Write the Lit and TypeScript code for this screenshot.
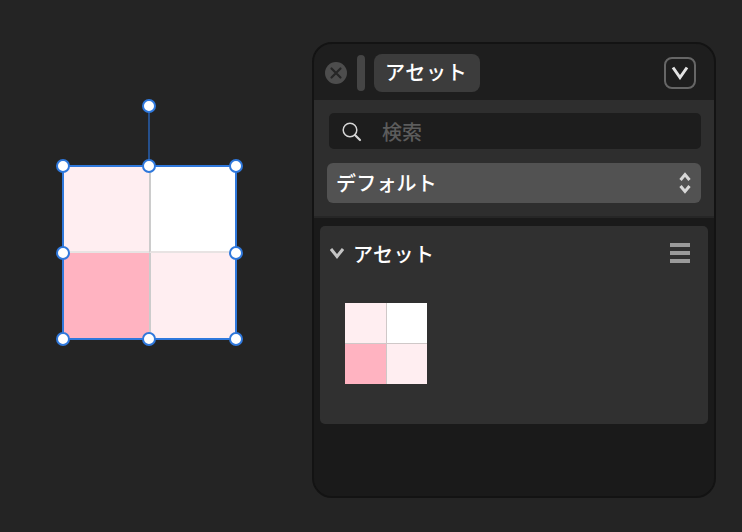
import { LitElement, html, css } from "lit";
import { customElement } from "lit/decorators.js";

const handles: [number, number][] = [
  [149, 106], [63, 166], [149, 166], [236, 166], [63, 253], [236, 253], [63, 339], [149, 339], [236, 339],
];

@customElement("app-root")
export class AppRoot extends LitElement {
  static styles = css`
    :host { display: block; width: 742px; height: 532px; background: #242424; overflow: hidden;
      font-family: "Inter", "Noto Sans CJK JP", sans-serif; }
    .page { display: flex; height: 532px; box-sizing: border-box; padding: 0 26px 0 0; }
    .canvas { position: relative; width: 312px; flex: none; }
    .shape { position: absolute; left: 62px; top: 165px; width: 175px; height: 175px; box-sizing: border-box;
      border: 2px solid #2f78dc; }
    .shape .tile { grid-template-columns: 85px 1fr; }
    .stem { position: absolute; left: 148px; top: 106px; width: 2px; height: 60px; background: #26508c; }
    .handle { position: absolute; width: 14px; height: 14px; box-sizing: border-box; border-radius: 50%;
      background: #fff; border: 2px solid #2f78dc; margin: -7px 0 0 -7px; }
    .tile { display: grid; width: 100%; height: 100%; grid-template: 1fr 1fr / 1fr 1fr; }
    .tile div { box-sizing: border-box; }
    .c1 { background: #ffeef1; }
    .c2 { background: #fff; }
    .c3 { background: #ffb3c1; }
    .c4 { background: #ffeef1; }
    .c2, .c4 { border-left: 2px solid #ccc; }
    .c1, .c2 { border-bottom: 2px solid #e8e3e3; }
    .panel { flex: 1; margin: 42px 0 34px; display: flex; flex-direction: column; box-sizing: border-box; border: 2px solid #131313;
      border-radius: 20px; background: #1a1a1a; overflow: hidden; }
    .head { height: 56px; flex: none; display: flex; align-items: center; padding: 2px 18px 0 11px; background: #1e1e1e; box-sizing: border-box; }
    .close { width: 22px; height: 22px; flex: none; display: block; }
    .sep { width: 8px; height: 36px; border-radius: 4px; background: #454545; margin: 0 9px 0 10px; }
    .tab { width: 106px; height: 38px; border-radius: 8px; background: #3c3c3c; color: #fff; font-size: 20px; font-weight: 500;
      display: flex; align-items: center; padding: 0 0 3px 11px; box-sizing: border-box; letter-spacing: 0.7px; }
    .collapse { margin-left: auto; margin-top: -1px; width: 32px; height: 32px; box-sizing: border-box; border: 2px solid #666; border-radius: 8px;
      display: flex; align-items: center; justify-content: center; }
    .filters { height: 118px; flex: none; background: #2e2e2e; box-sizing: border-box; padding: 13px 13px 0 13px; border-bottom: 2px solid #262626; }
    .search { margin-left: 2px; height: 36px; border-radius: 5px; background: #1d1d1d; display: flex; align-items: center;
      padding-left: 12px; color: #5c5c5c; font-size: 20px; font-weight: 500; }
    .search svg { width: 21px; height: 21px; margin-right: 20px; flex: none; }
    .select { margin-top: 14px; height: 40px; border-radius: 6px; background: #525252; display: flex; align-items: center;
      justify-content: space-between; padding: 0 10px 2px 9px; box-sizing: border-box; color: #fff; font-size: 20px; font-weight: 500; letter-spacing: 0.2px; }
    .select svg { width: 12px; height: 22px; display: block; margin-top: 2px; }
    .body { flex: 1; padding: 8px 6px 0 6px; background: #1a1a1a; }
    .card { height: 198px; border-radius: 5px; background: #303030; box-sizing: border-box; padding: 13px 18px 0 10px; }
    .card-head { display: flex; align-items: center; height: 28px; color: #fff; font-size: 20px; font-weight: 500; letter-spacing: 0.5px; }
    .card-head .chev { width: 14px; height: 12px; margin-right: 9px; flex: none; }
    .menu { margin-left: auto; display: flex; flex-direction: column; gap: 4px; }
    .menu span { display: block; width: 20px; height: 4px; background: #9a9a9a; }
    .thumb { width: 82px; height: 81px; margin: 36px 0 0 15px; }
    .thumb .tile { grid-template-columns: 41px 1fr; }
    .thumb .c2, .thumb .c4 { border-left: 1px solid #cfc8c8; }
    .thumb .c1, .thumb .c2 { border-bottom: 1px solid #cfc8c8; }
  `;

  tile() {
    return html`<div class="tile"><div class="c1"></div><div class="c2"></div><div class="c3"></div><div class="c4"></div></div>`;
  }

  render() {
    return html`
      <div class="page">
        <div class="canvas">
          <div class="stem"></div>
          <div class="shape">${this.tile()}</div>
          ${handles.map(([x, y]) => html`<div class="handle" style="left:${x}px;top:${y}px"></div>`)}
        </div>
        <div class="panel">
          <div class="head">
            <svg class="close" viewBox="0 0 22 22">
              <circle cx="11" cy="11" r="11" fill="#4d4d4d"></circle>
              <path d="M6.5 6.5l9 9M15.5 6.5l-9 9" stroke="#262626" stroke-width="2.2" stroke-linecap="round"></path>
            </svg>
            <div class="sep"></div>
            <div class="tab">アセット</div>
            <div class="collapse">
              <svg width="18" height="14" viewBox="0 0 18 14">
                <path d="M2 1.5L9 11.5L16 1.5" fill="none" stroke="#e2e2e2" stroke-width="3"></path>
              </svg>
            </div>
          </div>
          <div class="filters">
            <div class="search">
              <svg viewBox="0 0 21 21">
                <circle cx="9" cy="9" r="6.8" fill="none" stroke="#d6d6d6" stroke-width="1.5"></circle>
                <path d="M14 14l5 5" stroke="#d6d6d6" stroke-width="2.2" stroke-linecap="round"></path>
              </svg>
              検索
            </div>
            <div class="select">
              デフォルト
              <svg viewBox="0 0 12 22">
                <path d="M1.5 8L6 2.5L10.5 8M1.5 14L6 19.5L10.5 14" fill="none" stroke="#d8d8d8" stroke-width="3"></path>
              </svg>
            </div>
          </div>
          <div class="body">
            <div class="card">
              <div class="card-head">
                <svg class="chev" viewBox="0 0 14 12">
                  <path d="M1 2L7 9.5L13 2" fill="none" stroke="#c4c4c4" stroke-width="3"></path>
                </svg>
                アセット
                <div class="menu"><span></span><span></span><span></span></div>
              </div>
              <div class="thumb">${this.tile()}</div>
            </div>
          </div>
        </div>
      </div>
    `;
  }
}
